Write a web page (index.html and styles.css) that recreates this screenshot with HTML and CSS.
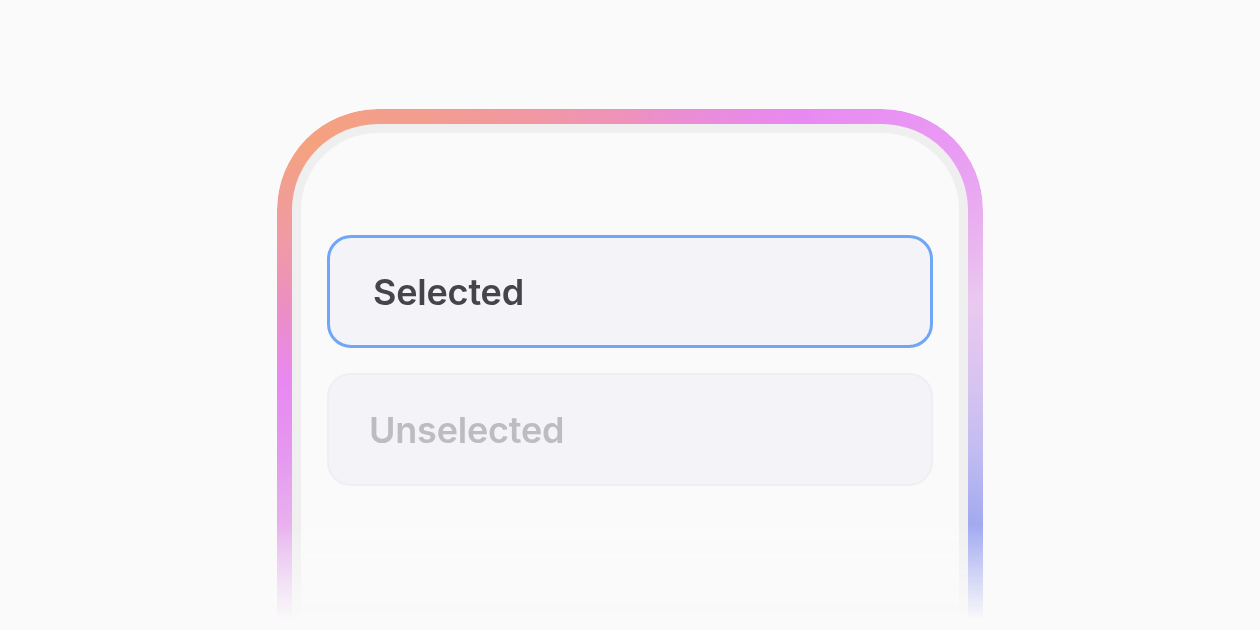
FILE: index.html
```html
<!doctype html>
<html lang="en">
<head>
  <meta charset="utf-8" />
  <meta name="viewport" content="width=device-width,initial-scale=1" />
  <title>Option states</title>
  <link rel="stylesheet" href="styles.css">
</head>
<body>
  <div class="stage">
    <!-- Phone frame with glow ring -->
    <div class="frame">
      <div class="bezel">
        <div class="screen">
          <div class="option selected">Selected</div>
          <div class="option">Unselected</div>
        </div>
      </div>
    </div>
  </div>
</body>
</html>
```

FILE: styles.css
```css
:root {
  --page: #fafafa;
  --bezel: #efefef;
  --card: #f4f3f8;
  --accent: #6fa6f7;
  font-family: Inter, "Noto Sans", sans-serif;
}
html, body { margin:0; padding:0; height:100%; }
body { background:var(--page); overflow:hidden; }
.stage {
  display:flex; justify-content:center;
  padding-top:109px; height:630px; box-sizing:border-box;
}
/* Frame */
.frame {
  width:706px; height:521px; box-sizing:border-box;
  padding:15px 15px 0;
  border-radius:101px 101px 0 0;
  background:conic-gradient(from 0deg at 50% 50%,
    #ee92bc 0deg, #ec8fc8 4deg, #e889f2 34deg, #e99af3 55deg,
    #e9b5ef 70deg, #eac9ef 79deg, #d8c4f0 92deg, #c2bdf0 103deg,
    #a3aaf0 114deg, #a3aaf0 132deg, #e8c0f0 228deg, #e8b5ef 244deg,
    #e598ef 256deg, #e888f2 268deg, #ec8fc0 281deg, #ef9aa6 290deg,
    #f5a27f 305deg, #f29a98 329deg, #ee92bc 360deg);
  -webkit-mask-image:linear-gradient(to bottom, #000 80%, transparent 98%);
  mask-image:linear-gradient(to bottom, #000 80%, transparent 98%);
}
.bezel {
  height:100%; box-sizing:border-box;
  padding:9px 9px 0;
  background:var(--bezel);
  border-radius:86px 86px 0 0;
}
.screen {
  height:100%; box-sizing:border-box;
  padding:102px 26px 0;
  background:var(--page);
  border-radius:77px 77px 0 0;
  display:flex; flex-direction:column; gap:25px;
}
/* Options */
.option {
  height:113px; box-sizing:border-box;
  display:flex; align-items:center;
  padding-left:40px;
  background:var(--card);
  border:2px solid #efeef2;
  border-radius:24px;
  font-size:36px; font-weight:600; letter-spacing:-0.2px;
  color:#bdbcc1;
}
.option.selected {
  border:3px solid var(--accent);
  padding-left:43px;
  color:#45444a;
}
```
